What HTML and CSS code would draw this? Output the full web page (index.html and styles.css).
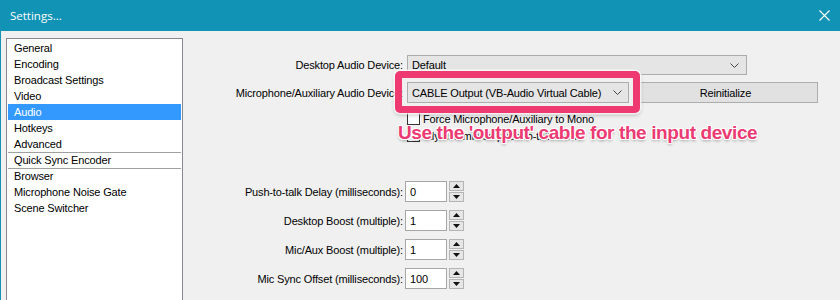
FILE: index.html
```html
<!DOCTYPE html>
<html>
<head>
<meta charset="utf-8">
<link rel="stylesheet" href="styles.css">
</head>
<body>
<div class="window">
  <div class="titlebar">
    <span class="title">Settings...</span>
    <svg class="close" width="11" height="11" viewBox="0 0 11 11"><path d="M0.5 0.5 L10.5 10.5 M10.5 0.5 L0.5 10.5" stroke="#ffffff" stroke-width="1.1" fill="none"/></svg>
  </div>
  <div class="content">
    <ul class="nav">
      <li>General</li>
      <li>Encoding</li>
      <li>Broadcast Settings</li>
      <li>Video</li>
      <li class="sel">Audio</li>
      <li>Hotkeys</li>
      <li>Advanced</li>
      <li class="sep">Quick Sync Encoder</li>
      <li class="sep">Browser</li>
      <li>Microphone Noise Gate</li>
      <li>Scene Switcher</li>
    </ul>
    <div class="panel">
      <div class="row r1">
        <span class="lbl">Desktop Audio Device:</span>
        <div class="select wide"><span>Default</span><svg class="chev" width="9" height="5" viewBox="0 0 9 5"><polyline points="0.5,0.5 4.5,4.5 8.5,0.5" fill="none" stroke="#444" stroke-width="1"/></svg></div>
      </div>
      <div class="row r2">
        <span class="lbl">Microphone/Auxiliary Audio Device:</span>
        <div class="select narrow"><span>CABLE Output (VB-Audio Virtual Cable)</span><svg class="chev" width="9" height="5" viewBox="0 0 9 5"><polyline points="0.5,0.5 4.5,4.5 8.5,0.5" fill="none" stroke="#444" stroke-width="1"/></svg></div>
        <div class="btn">Reinitialize</div>
      </div>
      <div class="check c1"><span class="box"></span><span>Force Microphone/Auxiliary to Mono</span></div>
      <div class="check c2"><span class="box"></span><span>Inly use mic on push-to-talk mode</span></div>

      <div class="row spinrow s1">
        <span class="lbl">Push-to-talk Delay (milliseconds):</span>
        <div class="spinfield">0</div>
        <div class="spinner"><span class="up"><svg width="7" height="4" viewBox="0 0 7 4"><polygon points="0,4 3.5,0 7,4" fill="#111"/></svg></span><span class="down"><svg width="7" height="4" viewBox="0 0 7 4"><polygon points="0,0 3.5,4 7,0" fill="#111"/></svg></span></div>
      </div>
      <div class="row spinrow">
        <span class="lbl">Desktop Boost (multiple):</span>
        <div class="spinfield">1</div>
        <div class="spinner"><span class="up"><svg width="7" height="4" viewBox="0 0 7 4"><polygon points="0,4 3.5,0 7,4" fill="#111"/></svg></span><span class="down"><svg width="7" height="4" viewBox="0 0 7 4"><polygon points="0,0 3.5,4 7,0" fill="#111"/></svg></span></div>
      </div>
      <div class="row spinrow">
        <span class="lbl">Mic/Aux Boost (multiple):</span>
        <div class="spinfield">1</div>
        <div class="spinner"><span class="up"><svg width="7" height="4" viewBox="0 0 7 4"><polygon points="0,4 3.5,0 7,4" fill="#111"/></svg></span><span class="down"><svg width="7" height="4" viewBox="0 0 7 4"><polygon points="0,0 3.5,4 7,0" fill="#111"/></svg></span></div>
      </div>
      <div class="row spinrow">
        <span class="lbl">Mic Sync Offset (milliseconds):</span>
        <div class="spinfield">100</div>
        <div class="spinner"><span class="up"><svg width="7" height="4" viewBox="0 0 7 4"><polygon points="0,4 3.5,0 7,4" fill="#111"/></svg></span><span class="down"><svg width="7" height="4" viewBox="0 0 7 4"><polygon points="0,0 3.5,4 7,0" fill="#111"/></svg></span></div>
      </div>
    </div>
  </div>
  <div class="callout"></div>
  <div class="note">Use the 'output' cable for the input device</div>
</div>
</body>
</html>
```
FILE: styles.css
```css
* { box-sizing: border-box; }
html, body { margin: 0; padding: 0; }
body {
  width: 840px;
  height: 300px;
  overflow: hidden;
  background: #f0f0f0;
  font-family: "Liberation Sans", Arial, sans-serif;
  font-size: 11px;
  letter-spacing: -0.15px;
  color: #000;
}
.window {
  position: relative;
  width: 840px;
  height: 300px;
  border-left: 1px solid #1493b5;
  background: #f0f0f0;
  overflow: hidden;
}
.titlebar {
  height: 31px;
  background: #1193b6;
  display: flex;
  align-items: center;
  justify-content: space-between;
  padding: 0 10px 0 9px;
}
.title {
  color: #fff;
  font-family: "Open Sans", "Noto Sans", sans-serif;
  font-size: 11.5px;
  letter-spacing: 0;
  margin-top: -1px;
}
.close { display: block; margin-top: -1px; }
.content {
  display: flex;
  align-items: flex-start;
}
.nav {
  list-style: none;
  margin: 7px 0 0 5px;
  padding: 1px 1px 0 1px;
  width: 177px;
  height: 280px;
  background: #fff;
  border: 1px solid #86898f;
  flex-shrink: 0;
}
.nav li {
  height: 16px;
  line-height: 16px;
  padding-left: 6px;
  white-space: nowrap;
}
.nav li.sel {
  background: #3399ff;
  color: #fff;
}
.nav li.sep {
  border-top: 1px solid #a0a0a0;
  line-height: 15px;
}
.panel {
  flex: 1;
  padding-top: 24px;
  display: flex;
  flex-direction: column;
}
.row {
  display: flex;
  align-items: center;
  height: 20px;
}
.lbl {
  width: 220px;
  text-align: right;
  margin-right: 4px;
  white-space: nowrap;
  flex-shrink: 0;
}
.r2 { margin-top: 7px; height: 21px; }
.select {
  height: 20px;
  background: #e5e5e5;
  border: 1px solid #acacac;
  display: flex;
  align-items: center;
  justify-content: space-between;
  padding: 0 6px 0 4px;
}
.select.wide { width: 340px; padding-right: 7px; }
.select.narrow { width: 222px; height: 21px; }
.chev { display: block; }
.btn {
  width: 185px;
  height: 21px;
  margin-left: 4px;
  background: #e1e1e1;
  border: 1px solid #adadad;
  display: flex;
  align-items: center;
  justify-content: center;
}
.check {
  display: flex;
  align-items: center;
  height: 13px;
  margin-left: 224px;
}
.c1 { margin-top: 9px; }
.c2 { margin-top: 4px; }
.box {
  width: 13px;
  height: 13px;
  background: #fff;
  border: 1px solid #333;
  margin-right: 3px;
  flex-shrink: 0;
}
.spinrow { height: 21px; margin-top: 8px; }
.spinrow.s1 { margin-top: 39px; }
.spinrow .lbl { margin-right: 2px; }
.spinfield {
  width: 42px;
  height: 21px;
  background: #fff;
  border: 1px solid #a6a6a6;
  padding-left: 4px;
  display: flex;
  align-items: center;
}
.spinner {
  margin-left: 2px;
  width: 15px;
  height: 21px;
  display: flex;
  flex-direction: column;
  justify-content: space-between;
}
.spinner span {
  height: 10px;
  background: #e6e6e6;
  border: 1px solid #b4b4b4;
  display: flex;
  align-items: center;
  justify-content: center;
}
.spinner svg { display: block; }
.callout {
  position: absolute;
  left: 394px;
  top: 71px;
  width: 245px;
  height: 42px;
  border: 7px solid #ee3a71;
  border-radius: 5px;
  box-shadow: 0 0 0 1.5px rgba(255,255,255,0.75), 0 2px 4px rgba(0,0,0,0.25);
}
.note {
  position: absolute;
  left: 397px;
  top: 123px;
  font-family: "Liberation Sans", Arial, sans-serif;
  font-weight: bold;
  font-size: 19px;
  line-height: 19px;
  letter-spacing: -0.4px;
  color: #ec3a72;
  white-space: nowrap;
  text-shadow:
    1px 0 0 #fff, -1px 0 0 #fff, 0 1px 0 #fff, 0 -1px 0 #fff,
    1px 1px 0 #fff, -1px -1px 0 #fff, 1px -1px 0 #fff, -1px 1px 0 #fff,
    0 2px 3px rgba(0,0,0,0.35);
}
```
